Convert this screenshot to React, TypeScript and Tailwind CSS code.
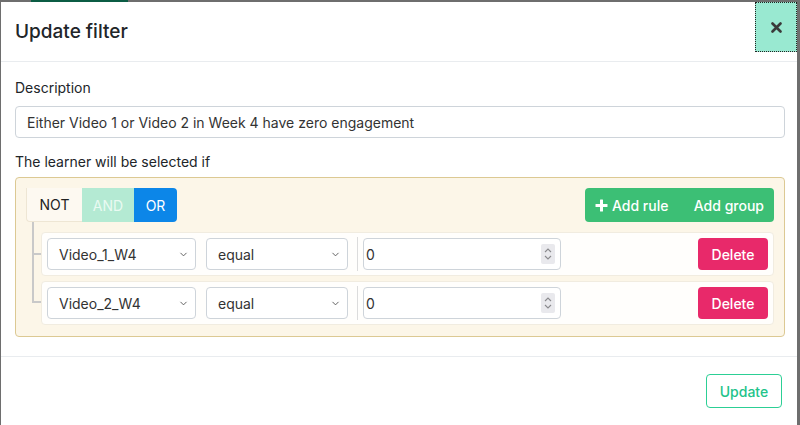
import { ChevronDown } from "lucide-react";

function Select({ value, width }: { value: string; width: string }) {
    return (
        <div className={`flex items-center justify-between h-[32px] ${width} rounded-[4px] border border-[#ced4da] bg-white pl-[11px] pr-[6px] text-[14px] text-[#333]`}>
            <span>{value}</span>
            <ChevronDown size={11} strokeWidth={2} className="text-[#555]" />
        </div>
    );
}

function NumberInput() {
    return (
        <div className="flex items-center justify-between h-[32px] w-[198px] rounded-[4px] border border-[#ced4da] bg-white pl-[2px] pr-[5px] text-[14px] text-[#333]">
            <span>0</span>
            <div className="flex flex-col items-center justify-center w-[14px] h-[20px] bg-[#e9e9ed] rounded-[2px]">
                <svg width="8" height="16" viewBox="0 0 8 16" fill="none" stroke="#8a8a8e" strokeWidth="1.1">
                    <path d="M1 6 L4 3 L7 6" />
                    <path d="M1 10 L4 13 L7 10" />
                </svg>
            </div>
        </div>
    );
}

function RuleRow({ field }: { field: string }) {
    return (
        <div className="relative flex items-center h-[44px] ml-[15px] rounded-[4px] border border-[#f1ece0] bg-[#fffefc] px-[5px]">
            <Select value={field} width="w-[149px]" />
            <div className="ml-[10px]">
                <Select value="equal" width="w-[142px]" />
            </div>
            <div className="ml-[9px] mr-[5px] w-px h-[34px] bg-[#dcdcdc]" />
            <NumberInput />
            <div className="flex-1" />
            <button className="h-[32px] w-[70px] rounded-[4px] bg-[#e8296a] text-white text-[14px] font-medium">Delete</button>
        </div>
    );
}

export default function App() {
    return (
        <div className="w-[800px] h-[425px] bg-[#6e6e6e] flex flex-col overflow-hidden" style={{ fontFamily: "Inter, 'Noto Sans', sans-serif" }}>
            <div className="h-[2px] flex">
                <div className="w-[31px]" />
                <div className="w-[97px] bg-[#0b5c44]" />
            </div>
            <div className="flex-1 flex pl-px pr-[3px]">
                <div className="flex-1 bg-white flex flex-col text-[#212529]">
                    <div className="flex items-start justify-between h-[60px] border-b border-[#e9ecef]">
                        <h1 className="pl-[14px] pt-[18px] text-[19px] font-medium leading-[24px]">Update filter</h1>
                        <button className="w-[42px] h-[50px] bg-[#99e9d1] border border-dotted border-[#222] flex items-center justify-center">
                            <svg width="11" height="11" viewBox="0 0 11 11" stroke="#3a3a3a" strokeWidth="2.6" strokeLinecap="round">
                                <path d="M1.5 1.5 L9.5 9.5 M9.5 1.5 L1.5 9.5" />
                            </svg>
                        </button>
                    </div>
                    <div className="pl-[14px] pr-[12px] pt-[16px] pb-[19px] border-b border-[#e9ecef]">
                        <div className="text-[14px] leading-[20px]">Description</div>
                        <div className="mt-[8px] h-[32px] rounded-[4px] border border-[#ced4da] flex items-center px-[11px] text-[14px] text-[#333]">
                            Either Video 1 or Video 2 in Week 4 have zero engagement
                        </div>
                        <div className="mt-[14px] text-[14px] leading-[20px]">The learner will be selected if</div>
                        <div className="mt-[5px] h-[160px] rounded-[4px] border border-[#dcc993] bg-[#fcf6e8] pl-[10px] pr-[10px] pt-[10px]">
                            <div className="flex items-center justify-between h-[34px]">
                                <div className="flex h-full text-[14px]">
                                    <div className="w-[56px] flex items-center justify-center bg-[#fdf9f1] border-b border-l border-[#eee6d4] rounded-bl-[4px] text-[#222]">NOT</div>
                                    <div className="w-[52px] flex items-center justify-center bg-[#b4ead3] text-[#eafaf2]">AND</div>
                                    <div className="w-[43px] flex items-center justify-center bg-[#0c86e8] text-white rounded-r-[4px]">OR</div>
                                </div>
                                <div className="flex h-full w-[189px] items-center justify-between bg-[#3cbf75] rounded-[4px] text-white text-[14px] font-medium px-[10px]">
                                    <span className="flex items-center">
                                        <svg width="13" height="13" viewBox="0 0 13 13" className="mr-[4px]" fill="white">
                                            <rect x="5" y="0.5" width="3" height="12" rx="0.5" />
                                            <rect x="0.5" y="5" width="12" height="3" rx="0.5" />
                                        </svg>
                                        Add rule
                                    </span>
                                    <span>Add group</span>
                                </div>
                            </div>
                            <div className="relative mt-[10px] flex flex-col gap-[5px]">
                                <div className="absolute left-[6px] top-[-10px] w-[2px] h-[81px] bg-[#c9c9c9] rounded-bl-[3px]" />
                                <div className="absolute left-[6px] top-[21px] w-[9px] h-[2px] bg-[#c9c9c9]" />
                                <div className="absolute left-[6px] top-[69px] w-[9px] h-[2px] bg-[#c9c9c9]" />
                                <RuleRow field="Video_1_W4" />
                                <RuleRow field="Video_2_W4" />
                            </div>
                        </div>
                    </div>
                    <div className="flex justify-end pt-[17px] pr-[15px]">
                        <button className="h-[34px] w-[76px] rounded-[4px] border border-[#2ccf95] text-[#22c38a] text-[14px] font-medium">Update</button>
                    </div>
                </div>
            </div>
        </div>
    );
}
